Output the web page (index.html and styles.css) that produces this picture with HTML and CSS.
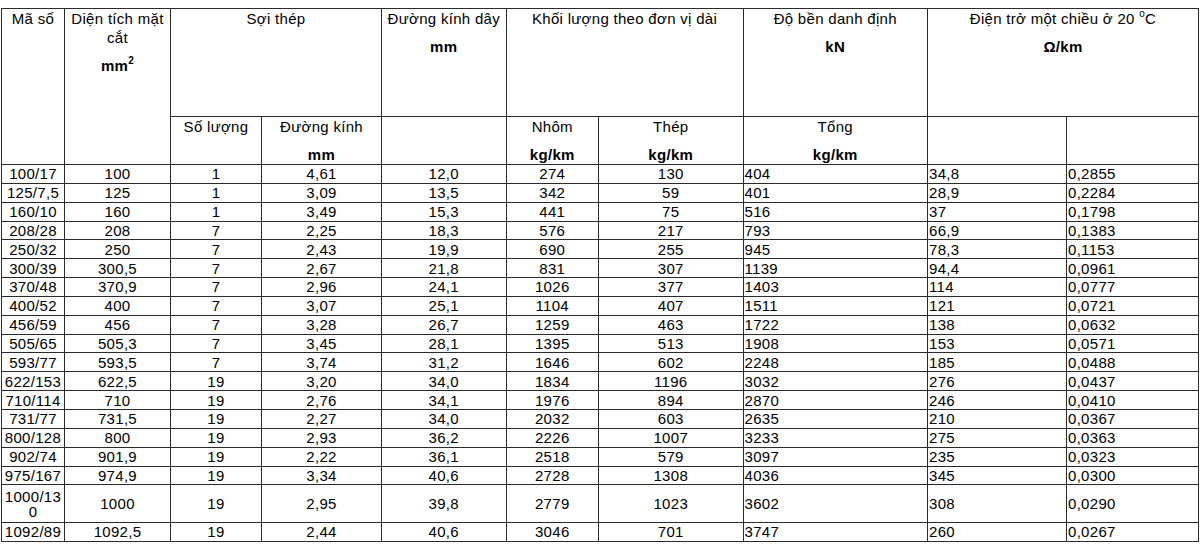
FILE: index.html
```html
<!DOCTYPE html>
<html lang="vi">
<head>
<meta charset="utf-8">
<title>Bảng thông số dây</title>
<link rel="stylesheet" href="styles.css">
</head>
<body>
<table class="spec">
  <colgroup>
    <col class="c1"><col class="c2"><col class="c3"><col class="c4"><col class="c5">
    <col class="c6"><col class="c7"><col class="c8"><col class="c9"><col class="c10">
  </colgroup>
  <thead>
    <tr class="h1">
      <th rowspan="2">Mã số</th>
      <th rowspan="2">Diện tích mặt cắt<span class="unit">mm<sup>2</sup></span></th>
      <th colspan="2">Sợi thép</th>
      <th>Đường kính dây<span class="unit">mm</span></th>
      <th colspan="2">Khối lượng theo đơn vị dài</th>
      <th>Độ bền danh định<span class="unit">kN</span></th>
      <th colspan="2">Điện trở một chiều ở 20 <sup class="deg">o</sup>C<span class="unit">Ω/km</span></th>
    </tr>
    <tr class="h2">
      <th>Số lượng</th>
      <th>Đường kính<span class="unit">mm</span></th>
      <th></th>
      <th>Nhôm<span class="unit">kg/km</span></th>
      <th>Thép<span class="unit">kg/km</span></th>
      <th>Tổng<span class="unit">kg/km</span></th>
      <th></th>
      <th></th>
    </tr>
  </thead>
  <tbody>
    <tr><td>100/17</td><td>100</td><td>1</td><td>4,61</td><td>12,0</td><td>274</td><td>130</td><td class="l">404</td><td class="l">34,8</td><td class="l">0,2855</td></tr>
    <tr><td>125/7,5</td><td>125</td><td>1</td><td>3,09</td><td>13,5</td><td>342</td><td>59</td><td class="l">401</td><td class="l">28,9</td><td class="l">0,2284</td></tr>
    <tr><td>160/10</td><td>160</td><td>1</td><td>3,49</td><td>15,3</td><td>441</td><td>75</td><td class="l">516</td><td class="l">37</td><td class="l">0,1798</td></tr>
    <tr><td>208/28</td><td>208</td><td>7</td><td>2,25</td><td>18,3</td><td>576</td><td>217</td><td class="l">793</td><td class="l">66,9</td><td class="l">0,1383</td></tr>
    <tr><td>250/32</td><td>250</td><td>7</td><td>2,43</td><td>19,9</td><td>690</td><td>255</td><td class="l">945</td><td class="l">78,3</td><td class="l">0,1153</td></tr>
    <tr><td>300/39</td><td>300,5</td><td>7</td><td>2,67</td><td>21,8</td><td>831</td><td>307</td><td class="l">1139</td><td class="l">94,4</td><td class="l">0,0961</td></tr>
    <tr><td>370/48</td><td>370,9</td><td>7</td><td>2,96</td><td>24,1</td><td>1026</td><td>377</td><td class="l">1403</td><td class="l">114</td><td class="l">0,0777</td></tr>
    <tr><td>400/52</td><td>400</td><td>7</td><td>3,07</td><td>25,1</td><td>1104</td><td>407</td><td class="l">1511</td><td class="l">121</td><td class="l">0,0721</td></tr>
    <tr><td>456/59</td><td>456</td><td>7</td><td>3,28</td><td>26,7</td><td>1259</td><td>463</td><td class="l">1722</td><td class="l">138</td><td class="l">0,0632</td></tr>
    <tr><td>505/65</td><td>505,3</td><td>7</td><td>3,45</td><td>28,1</td><td>1395</td><td>513</td><td class="l">1908</td><td class="l">153</td><td class="l">0,0571</td></tr>
    <tr><td>593/77</td><td>593,5</td><td>7</td><td>3,74</td><td>31,2</td><td>1646</td><td>602</td><td class="l">2248</td><td class="l">185</td><td class="l">0,0488</td></tr>
    <tr><td>622/153</td><td>622,5</td><td>19</td><td>3,20</td><td>34,0</td><td>1834</td><td>1196</td><td class="l">3032</td><td class="l">276</td><td class="l">0,0437</td></tr>
    <tr><td>710/114</td><td>710</td><td>19</td><td>2,76</td><td>34,1</td><td>1976</td><td>894</td><td class="l">2870</td><td class="l">246</td><td class="l">0,0410</td></tr>
    <tr><td>731/77</td><td>731,5</td><td>19</td><td>2,27</td><td>34,0</td><td>2032</td><td>603</td><td class="l">2635</td><td class="l">210</td><td class="l">0,0367</td></tr>
    <tr><td>800/128</td><td>800</td><td>19</td><td>2,93</td><td>36,2</td><td>2226</td><td>1007</td><td class="l">3233</td><td class="l">275</td><td class="l">0,0363</td></tr>
    <tr><td>902/74</td><td>901,9</td><td>19</td><td>2,22</td><td>36,1</td><td>2518</td><td>579</td><td class="l">3097</td><td class="l">235</td><td class="l">0,0323</td></tr>
    <tr><td>975/167</td><td>974,9</td><td>19</td><td>3,34</td><td>40,6</td><td>2728</td><td>1308</td><td class="l">4036</td><td class="l">345</td><td class="l">0,0300</td></tr>
    <tr class="tall"><td>1000/13<br>0</td><td>1000</td><td>19</td><td>2,95</td><td>39,8</td><td>2779</td><td>1023</td><td class="l">3602</td><td class="l">308</td><td class="l">0,0290</td></tr>
    <tr><td>1092/89</td><td>1092,5</td><td>19</td><td>2,44</td><td>40,6</td><td>3046</td><td>701</td><td class="l">3747</td><td class="l">260</td><td class="l">0,0267</td></tr>
  </tbody>
</table>
</body>
</html>
```
FILE: styles.css
```css
html, body {
  margin: 0;
  padding: 0;
  background: #ffffff;
}

body {
  padding: 8px 0 0 1px;
  font-family: "Liberation Sans", Arial, sans-serif;
  font-size: 15px;
  letter-spacing: 0.3px;
  color: #000000;
}

.spec {
  border-collapse: collapse;
  table-layout: fixed;
  width: 1197px;
}

.c1 { width: 63px; }
.c2 { width: 106px; }
.c3 { width: 91px; }
.c4 { width: 120px; }
.c5 { width: 124.5px; }
.c6 { width: 92.5px; }
.c7 { width: 144.5px; }
.c8 { width: 184.5px; }
.c9 { width: 139px; }
.c10 { width: 132px; }

.spec th,
.spec td {
  border: 1px solid #2b2b2b;
  padding: 0 1px;
}

.spec th {
  font-weight: normal;
  text-align: center;
  vertical-align: top;
  line-height: 19px;
}

.h1 { height: 108px; }
.h2 { height: 45px; }

.unit {
  display: block;
  margin-top: 9px;
  font-weight: bold;
}

sup {
  font-size: 10px;
  line-height: 0;
  vertical-align: 7px;
}

.deg {
  font-weight: normal;
}

.spec td {
  text-align: center;
  vertical-align: middle;
  line-height: 15px;
  height: 17.85px;
  padding-top: 0;
  padding-bottom: 0;
}

.spec td.l {
  text-align: left;
  padding-left: 1px;
}

.spec tr.tall td {
  height: 36.7px;
}
```
